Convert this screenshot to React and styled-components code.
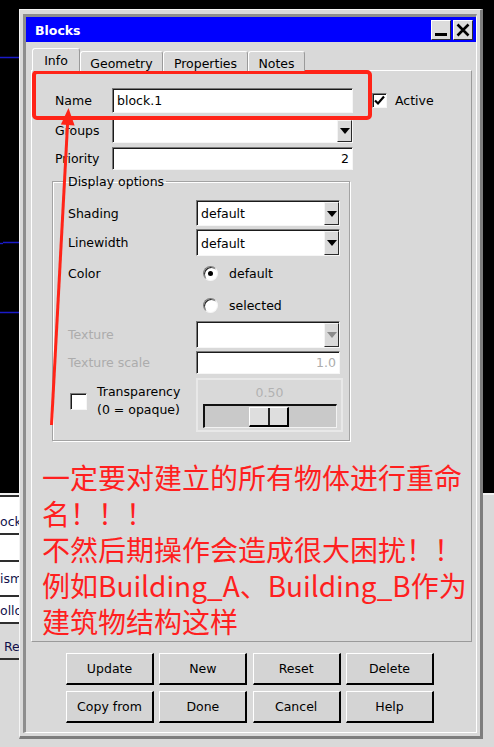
import React from 'react';
import styled, { createGlobalStyle } from 'styled-components';

const GlobalStyle = createGlobalStyle`
  html, body { margin: 0; padding: 0; background: #d9d9d9; }
  body {
    font-family: "DejaVu Sans", Verdana, sans-serif;
    font-size: 12.5px;
    color: #000;
  }
  * { box-sizing: border-box; }
`;

const Desktop = styled.div`
  position: relative;
  width: 494px;
  height: 747px;
  overflow: hidden;
  background: #d9d9d9;
`;

const Viewport = styled.div`
  height: 495px;
  background: #000;
  border-bottom: 2px solid #f2f2f2;
`;

const Stubs = styled.div`
  display: flex;
  flex-direction: column;
  width: 19px;
  overflow: hidden;
`;

const Stub = styled.div`
  height: ${(p) => p.$h}px;
  background: ${(p) => (p.$white ? '#fff' : '#d9d9d9')};
  border-top: 2px solid #2e2e2e;
  display: flex;
  align-items: ${(p) => (p.$low ? 'flex-end' : 'center')};
  padding-bottom: ${(p) => (p.$low ? 4 : 0)}px;
  white-space: nowrap;
  color: #10104a;
  font-size: 12.5px;
`;

/* ---------- dialog window ---------- */

const Window = styled.div`
  position: absolute;
  left: 19px;
  top: 9px;
  width: 464px;
  height: 730px;
  background: #d9d9d9;
  border-style: solid;
  border-width: 1px 3px 3px 1px;
  border-color: #f4f4f4 #7d7d7d #7d7d7d #f4f4f4;
  padding: 4px 3px 3px 3px;
`;

const Frame = styled.div`
  height: 100%;
  border-style: solid;
  border-width: 3px 1px 1px 3px;
  border-color: #8e8e8e #fff #fff #8e8e8e;
  display: flex;
  flex-direction: column;
`;

const TitleBar = styled.div`
  height: 25px;
  background: #0000ff;
  display: flex;
  align-items: center;
  gap: 2px;
  padding: 1px 3px 0 9px;
  color: #fff;
  font-weight: bold;
`;

const TitleText = styled.div`
  flex: 1;
`;

const TitleButton = styled.div`
  width: 20px;
  height: 20px;
  background: #dcdcdc;
  border-style: solid;
  border-width: 1px;
  border-color: #fff #303030 #303030 #fff;
  display: flex;
  align-items: center;
  justify-content: center;
`;

const TabBar = styled.div`
  display: flex;
  align-items: flex-end;
  height: 23px;
  margin: 6px 0 -1px 0;
  padding-left: 6px;
`;

const Tab = styled.div`
  position: relative;
  z-index: 1;
  width: ${(p) => p.$w}px;
  height: ${(p) => (p.$active ? 23 : 20)}px;
  background: #d9d9d9;
  border-style: solid;
  border-width: 1px 1px 0 1px;
  border-color: #fff #9a9a9a transparent #fff;
  border-radius: 3px 3px 0 0;
  display: flex;
  align-items: center;
  justify-content: center;
  padding-top: ${(p) => (p.$active ? 0 : 3)}px;
`;

const Panel = styled.div`
  position: relative;
  margin-left: 5px;
  width: 441px;
  height: 572px;
  border-style: solid;
  border-width: 1px;
  border-color: #fff #9a9a9a #9a9a9a #fff;
  padding-top: 17px;
`;

const Form = styled.div`
  margin-left: 23px;
  display: flex;
  flex-direction: column;
`;

const Row = styled.div`
  display: flex;
  align-items: center;
  height: ${(p) => p.$h}px;
  margin-top: ${(p) => p.$mt || 0}px;
`;

const Label = styled.div`
  width: ${(p) => p.$w}px;
  flex: none;
  color: ${(p) => (p.$disabled ? '#acacac' : '#000')};
`;

const Field = styled.div`
  width: ${(p) => p.$w}px;
  height: 100%;
  flex: none;
  background: #fff;
  border-style: solid;
  border-width: 1px;
  border-color: #7a7a7a #f6f6f6 #f6f6f6 #7a7a7a;
  box-shadow: inset 1px 1px 0 #1a1a1a;
  display: flex;
  align-items: center;
  justify-content: ${(p) => (p.$right ? 'flex-end' : 'flex-start')};
  padding: 0 ${(p) => (p.$right ? 3 : 0)}px 0 4px;
  color: ${(p) => (p.$disabled ? '#acacac' : '#000')};
`;

const ComboText = styled.div`
  flex: 1;
  padding-top: 1px;
`;

const ArrowButton = styled.div`
  align-self: stretch;
  width: 15px;
  margin: 1px 0 0 0;
  background: #d9d9d9;
  border-style: solid;
  border-width: 1px;
  border-color: #f4f4f4 #2a2a2a #2a2a2a #f4f4f4;
  display: flex;
  align-items: center;
  justify-content: center;

  &::after {
    content: '';
    border-left: 5px solid transparent;
    border-right: 5px solid transparent;
    border-top: 6px solid ${(p) => (p.$disabled ? '#8a8a8a' : '#000')};
  }
`;

const Check = styled.div`
  width: ${(p) => p.$size}px;
  height: ${(p) => p.$size}px;
  flex: none;
  margin-left: ${(p) => p.$ml || 0}px;
  background: #fff;
  border-style: solid;
  border-width: 1px;
  border-color: #7a7a7a #f6f6f6 #f6f6f6 #7a7a7a;
  box-shadow: inset 1px 1px 0 #1a1a1a;
  display: flex;
  align-items: center;
  justify-content: center;
`;

const ActiveText = styled.span`
  margin-left: 8px;
`;

const Group = styled.fieldset`
  width: 298px;
  margin: 4px 0 0 -3px;
  padding: 0 0 8px 15px;
  border: 1px solid #a3a3a3;
  box-shadow: 1px 1px 0 #fff, inset 1px 1px 0 #fff;
`;

const Legend = styled.legend`
  padding: 0 2px;
  margin-left: -2px;
  line-height: 15px;
`;

const RadioLine = styled.div`
  display: flex;
  align-items: center;
  gap: 11px;
  padding-left: 7px;
`;

const Radio = styled.div`
  position: relative;
  width: 15px;
  height: 15px;
  border-radius: 50%;
  background: #fff;
  border-style: solid;
  border-width: 1px;
  border-color: #7a7a7a #f6f6f6 #f6f6f6 #7a7a7a;
  box-shadow: inset 1px 1px 0 #2a2a2a;

  &::after {
    content: '';
    display: ${(p) => (p.$on ? 'block' : 'none')};
    position: absolute;
    left: 4px;
    top: 4px;
    width: 5px;
    height: 5px;
    border-radius: 50%;
    background: #000;
  }
`;

const TransLabel = styled.div`
  width: 128px;
  flex: none;
  display: flex;
  align-items: center;
  gap: 10px;
  padding: 0 0 8px 2px;
  line-height: 18px;
`;

const SliderBox = styled.div`
  width: 147px;
  height: 54px;
  border: 2px solid #e8e8e8;
  display: flex;
  flex-direction: column;
  align-items: center;
  padding-top: 5px;
`;

const SliderValue = styled.div`
  color: #b2b2b2;
  height: 19px;
`;

const Track = styled.div`
  position: relative;
  width: 134px;
  height: 24px;
  background: #c9c9c9;
  border-style: solid;
  border-width: 2px 1px 1px 2px;
  border-color: #111 #f2f2f2 #f2f2f2 #111;
`;

const Thumb = styled.div`
  position: absolute;
  top: 1px;
  width: 40px;
  height: 20px;
  background: #dedede;
  border-style: solid;
  border-width: 1px 2px 2px 1px;
  border-color: #fff #000 #000 #fff;

  &::after {
    content: '';
    position: absolute;
    left: 18px;
    top: 0;
    bottom: 0;
    width: 2px;
    background: #222;
  }
`;

const Note = styled.div`
  margin: 18px 0 0 10px;
  font-family: "Noto Sans CJK SC", "Noto Sans", sans-serif;
  font-size: 28px;
  line-height: 36px;
  color: #ff1f1f;
  white-space: nowrap;
`;

const RedBox = styled.div`
  position: absolute;
  left: 0;
  top: -1px;
  width: 340px;
  height: 50px;
  border: 4px solid #ff2418;
  border-radius: 5px;
`;

const ArrowLayer = styled.svg`
  position: absolute;
  left: 0;
  top: 0;
  overflow: visible;
`;

const ButtonGrid = styled.div`
  display: grid;
  grid-template-columns: repeat(4, 88px);
  grid-auto-rows: 32px;
  gap: 6px 5.33px;
  margin-top: 11px;
  padding-left: 40px;
`;

const Button = styled.div`
  background: #d4d4d4;
  border-style: solid;
  border-width: 1px 2px 2px 1px;
  border-color: #fff #000 #000 #fff;
  display: flex;
  align-items: center;
  justify-content: center;
`;

function Combo({ w, value, disabled }) {
  return (
    <Field $w={w}>
      <ComboText>{value}</ComboText>
      <ArrowButton $disabled={disabled} />
    </Field>
  );
}

const buttons = ['Update', 'New', 'Reset', 'Delete', 'Copy from', 'Done', 'Cancel', 'Help'];
const transparency = 0.5;

export default function App() {
  return (
    <>
      <GlobalStyle />
      <Desktop>
        <Viewport>
          <svg width="494" height="493">
            <line x1="0" y1="57.5" x2="40" y2="57.5" stroke="#1a1ac8" strokeWidth="1.4" />
            <line x1="0" y1="243.5" x2="3" y2="243.5" stroke="#1a1ac8" strokeWidth="1.4" />
            <line x1="3" y1="242.5" x2="40" y2="242.5" stroke="#1a1ac8" strokeWidth="1.4" />
            <line x1="0" y1="312.5" x2="40" y2="312.5" stroke="#1a1ac8" strokeWidth="1.4" />
          </svg>
        </Viewport>
        <Stubs>
          <Stub $h={38} $white $low>ock</Stub>
          <Stub $h={27} $white />
          <Stub $h={35} $white>ism</Stub>
          <Stub $h={27} $white $low>ollo</Stub>
          <Stub $h={36} $low>&nbsp;Re</Stub>
          <Stub $h={20} />
        </Stubs>

        <Window>
          <Frame>
            <TitleBar>
              <TitleText>Blocks</TitleText>
              <TitleButton>
                <svg width="16" height="16">
                  <rect x="2" y="11" width="12" height="3" fill="#000" />
                </svg>
              </TitleButton>
              <TitleButton>
                <svg width="16" height="16">
                  <path d="M2.5 2.5 L13.5 13.5 M13.5 2.5 L2.5 13.5" stroke="#000" strokeWidth="2.6" />
                </svg>
              </TitleButton>
            </TitleBar>

            <TabBar>
              <Tab $w={48} $active>Info</Tab>
              <Tab $w={83}>Geometry</Tab>
              <Tab $w={85}>Properties</Tab>
              <Tab $w={57}>Notes</Tab>
            </TabBar>

            <Panel>
              <Form>
                <Row $h={25}>
                  <Label $w={57}>Name</Label>
                  <Field $w={241}>block.1</Field>
                  <Check $size={15} $ml={19}>
                    <svg width="11" height="11">
                      <path d="M1 5.5 L4 8.5 L10 1.5" stroke="#000" strokeWidth="2.2" fill="none" />
                    </svg>
                  </Check>
                  <ActiveText>Active</ActiveText>
                </Row>
                <Row $h={25} $mt={5}>
                  <Label $w={57}>Groups</Label>
                  <Combo w={241} value="" />
                </Row>
                <Row $h={23} $mt={4}>
                  <Label $w={57}>Priority</Label>
                  <Field $w={241} $right>2</Field>
                </Row>

                <Group>
                  <Legend>Display options</Legend>
                  <Row $h={26} $mt={11}>
                    <Label $w={128}>Shading</Label>
                    <Combo w={144} value="default" />
                  </Row>
                  <Row $h={27} $mt={3}>
                    <Label $w={128}>Linewidth</Label>
                    <Combo w={144} value="default" />
                  </Row>
                  <Row $h={30} $mt={2}>
                    <Label $w={128}>Color</Label>
                    <RadioLine>
                      <Radio $on />
                      default
                    </RadioLine>
                  </Row>
                  <Row $h={30} $mt={2}>
                    <Label $w={128} />
                    <RadioLine>
                      <Radio />
                      selected
                    </RadioLine>
                  </Row>
                  <Row $h={27} $mt={1}>
                    <Label $w={128} $disabled>Texture</Label>
                    <Combo w={144} value="" disabled />
                  </Row>
                  <Row $h={23} $mt={3}>
                    <Label $w={128} $disabled>Texture scale</Label>
                    <Field $w={144} $right $disabled>1.0</Field>
                  </Row>
                  <Row $h={54} $mt={4}>
                    <TransLabel>
                      <Check $size={17} />
                      <div>
                        Transparency
                        <br />
                        (0 = opaque)
                      </div>
                    </TransLabel>
                    <SliderBox>
                      <SliderValue>{transparency.toFixed(2)}</SliderValue>
                      <Track>
                        <Thumb style={{ left: Math.round((131 - 40) * transparency) - 2 }} />
                      </Track>
                    </SliderBox>
                  </Row>
                </Group>
              </Form>

              <Note>
                一定要对建立的所有物体进行重命
                <br />
                名！！！
                <br />
                不然后期操作会造成很大困扰！！
                <br />
                例如Building_A、Building_B作为
                <br />
                建筑物结构这样
              </Note>

              <RedBox />
              <ArrowLayer width="100" height="400">
                <line x1="19.5" y1="354" x2="35.6" y2="52" stroke="#ff2418" strokeWidth="3" />
                <polygon points="36.5,37 42.6,54.4 28.9,53.6" fill="#ff2418" />
              </ArrowLayer>
            </Panel>

            <ButtonGrid>
              {buttons.map((b) => (
                <Button key={b}>{b}</Button>
              ))}
            </ButtonGrid>
          </Frame>
        </Window>
      </Desktop>
    </>
  );
}
